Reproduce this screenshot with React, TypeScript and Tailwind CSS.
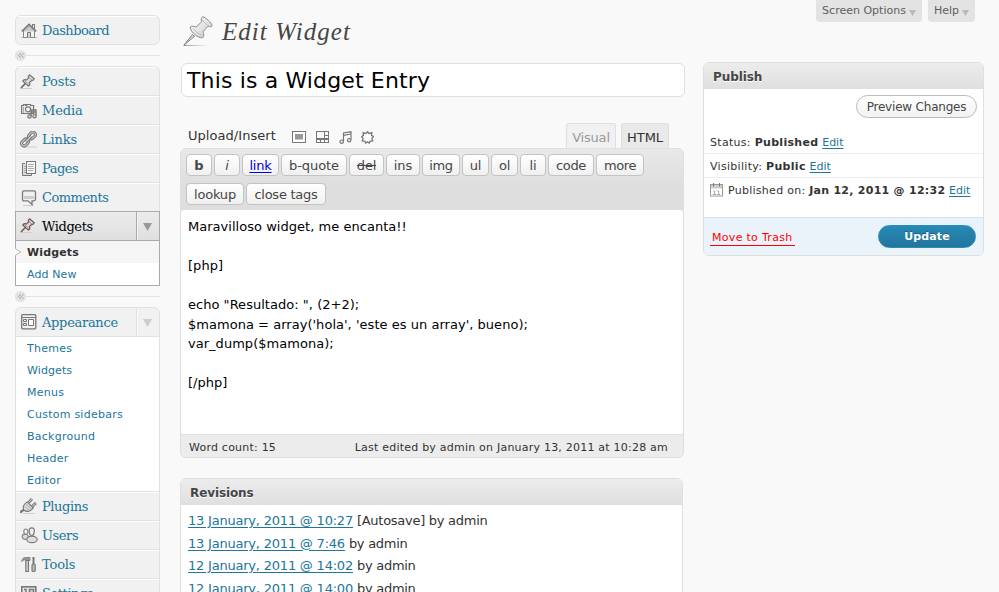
import React from "react";

type IconProps = { tint?: boolean };

const line = { fill: "none", stroke: "#7d7d7d", strokeWidth: 1.1 } as const;

function PinIcon({ tint }: IconProps) {
  return (
    <svg className="-ml-px" width="16" height="16" viewBox="0 0 16 16">
      <path d="M0 14.500H12" stroke={tint ? "#e3c9c9" : "#cfcfcf"} />
      <path d="M5.800 9L1 14" stroke="#666" strokeWidth="1.700" />
      <path
        d="M9.500.8l4.700 4-1.300 1.600-1-.1-2.400 2.200.2 2.600-1.300 1L2.800 7l1.300-1.300 2.500.2 2.200-2.400-.5-1.300z"
        fill={tint ? "#e6cfcd" : "#dedede"}
        stroke={tint ? "#6e5a5a" : "#757575"}
        strokeWidth="1.200"
        strokeLinejoin="round"
      />
      <path d="M9 3.500l3 2.700M4.800 6.800l4 3.500" stroke={tint ? "#a78f8d" : "#a5a5a5"} />
    </svg>
  );
}

function HomeIcon() {
  return (
    <svg width="16" height="16" viewBox="0 0 16 16">
      <path d="M0 14.500H16" stroke="#bbb" />
      <path d="M11.500 4V1.500h2v5" {...line} />
      <path d="M2.500 8v6.500h11V8L8 3z" fill="#f4f4f4" stroke="#858585" />
      <path d="M2.500 8.500L8 3l5.500 5.500z" fill="#c9c9c9" />
      <path d="M.8 8.400L8 1.300l7.200 7.100" fill="none" stroke="#777" strokeWidth="1.500" />
      <path d="M6.500 14.500v-5h3v5" fill="#d4d4d4" stroke="#777" />
    </svg>
  );
}

function MediaIcon() {
  return (
    <svg width="16" height="16" viewBox="0 0 16 16">
      <path d="M.6 2.500h2v-1h2v1h1v-1h4v1h3v8H.6z" fill="#e9e9e9" stroke="#777" strokeWidth="1.200" />
      <circle cx="7" cy="6.300" r="2.500" fill="#f8f8f8" stroke="#777" strokeWidth="1.200" />
      <path d="M2.500 4v6" stroke="#aaa" />
      <path d="M10 13.500V7h5v6M10 9h5" fill="none" stroke="#777" strokeWidth="1.400" />
      <circle cx="8.500" cy="13.500" r="1.700" fill="#ddd" stroke="#777" strokeWidth="1.200" />
      <circle cx="13.500" cy="13.200" r="1.700" fill="#ddd" stroke="#777" strokeWidth="1.200" />
    </svg>
  );
}

function LinkIcon() {
  return (
    <svg className="-ml-px" width="17" height="17" viewBox="0 0 17 17">
      <path d="M5 16h12" stroke="#cfcfcf" />
      <g fill="none" transform="rotate(-45 8.500 8)">
        <rect x="-.2" y="5.500" width="7.500" height="5" rx="2.500" stroke="#777" strokeWidth="3" />
        <rect x="9.700" y="5.500" width="7.500" height="5" rx="2.500" stroke="#777" strokeWidth="3" />
        <rect x="-.2" y="5.500" width="7.500" height="5" rx="2.500" stroke="#cfcfcf" strokeWidth="1" />
        <rect x="9.700" y="5.500" width="7.500" height="5" rx="2.500" stroke="#cfcfcf" strokeWidth="1" />
        <path d="M4.500 8h8" stroke="#777" strokeWidth="3" />
        <path d="M4.500 8h8" stroke="#e8e8e8" />
      </g>
    </svg>
  );
}

function PagesIcon() {
  return (
    <svg width="16" height="16" viewBox="0 0 16 16">
      <path d="M4 2.500H1.500v12h9V13" fill="#ddd" stroke="#777" />
      <rect x="5.500" y=".5" width="9" height="12" fill="#f7f7f7" stroke="#777" />
      <path d="M7 3.500h6M7 5.500h5M7 7.500h6M7 9.500h5M3 5.500h2M3 7.500h2M3 9.500h2M3 11.500h2" stroke="#aaa" />
    </svg>
  );
}

function CommentsIcon() {
  return (
    <svg width="16" height="16" viewBox="0 0 16 16">
      <path d="M2 15.500h11" stroke="#cfcfcf" />
      <path d="M3 .8h10q1.500 0 1.500 1.500v7q0 1.500-1.500 1.500h-2v3.700l-4-3.700H3q-1.500 0-1.500-1.500v-7Q1.500.8 3 .8z" fill="#f0f0f0" stroke="#7b7b7b" strokeWidth="1.300" />
      <path d="M3 6h10v3H3z" fill="#cdcdcd" />
    </svg>
  );
}

function AppearanceIcon() {
  return (
    <svg width="16" height="16" viewBox="0 0 16 16">
      <rect x=".7" y=".7" width="14.100" height="14.100" rx="1" fill="#f2f2f2" stroke="#777" strokeWidth="1.300" />
      <path d="M1 3.500h13.500" stroke="#777" strokeWidth="1.200" />
      <path d="M2.500 5.500h3v2h-3zM2.500 9.500h3v2h-3zM7.500 5.500h5v6h-5z" fill="#fff" stroke="#777" />
    </svg>
  );
}

function PlugIcon() {
  return (
    <svg className="-ml-px" width="17" height="17" viewBox="0 0 17 17">
      <path d="M3 15.500h12" stroke="#cfcfcf" />
      <path d="M1 15c-.3-2.300 1.300-1.800 2.800-3.300" fill="none" stroke="#777" strokeWidth="2.200" />
      <path d="M8.800 4.500L12 .9M12 8.500l3.900-3.600" stroke="#777" strokeWidth="2.800" />
      <path d="M8.800 4.500l3-3.300M12 8.500l3.600-3.300" stroke="#eee" strokeWidth=".9" />
      <path d="M3.900 12.200c-1.500-3.200.2-6.500 3.300-8.300l6 6c-2.200 3.300-6 4.500-9.300 2.300z" fill="#dcdcdc" stroke="#777" strokeWidth="1.200" />
      <path d="M6.200 6l5 5M5 8.500l3.700 3.700" stroke="#a5a5a5" />
    </svg>
  );
}

function UsersIcon() {
  return (
    <svg width="17" height="17" viewBox="0 0 17 17">
      <ellipse cx="4.200" cy="9.700" rx="3" ry="2.600" fill="#ddd" stroke="#888" strokeWidth="1.200" />
      <path d="M4.800 2c1.500 0 2.200 1 2.200 2.500S6.300 7.300 4.800 7.300 2.800 6 2.800 4.500 3.400 2 4.800 2z" fill="#eee" stroke="#888" strokeWidth="1.200" />
      <ellipse cx="11" cy="12.400" rx="5.200" ry="3.200" fill="#dedede" stroke="#777" strokeWidth="1.200" />
      <path d="M10.800.9c1.800 0 2.600 1.200 2.500 3-.1 2.400-.9 4.600-2.500 4.600S8.300 6.300 8.200 3.900C8.100 2.100 9 .9 10.800.9z" fill="#eee" stroke="#777" strokeWidth="1.200" />
    </svg>
  );
}

function ToolsIcon() {
  return (
    <svg width="16" height="17" viewBox="0 0 16 17">
      <path d="M.6 5.500C1 2.800 2.500 1.500 4.500 1.500H9v3H7L4.800 3.800C3 3.600 1.800 4.500.6 5.500z" fill="#999" stroke="#777" strokeWidth=".8" />
      <path d="M4.800 4.500h2.700v11H4.800z" fill="#ccc" stroke="#777" strokeWidth="1.100" />
      <path d="M12.500 1v8" stroke="#777" strokeWidth="2" />
      <rect x="11" y="8" width="3.200" height="7.500" rx="1.300" fill="#bbb" stroke="#777" strokeWidth="1.200" />
    </svg>
  );
}

function SettingsIcon() {
  return (
    <svg width="16" height="16" viewBox="0 0 16 16">
      <rect x=".8" y=".8" width="14" height="14" fill="#e8e8e8" stroke="#777" strokeWidth="1.600" />
      <path d="M3 3.500h2v9M8.500 3.500h4v3h-4zM8.500 6.500v5h4v-5" fill="none" stroke="#777" strokeWidth="1.500" />
    </svg>
  );
}

function BigPin() {
  return (
    <svg width="30" height="31" viewBox="0 0 30 31">
      <defs>
        <linearGradient id="pinFill" x1="0" y1="0" x2="1" y2="1">
          <stop offset="0" stopColor="#fff" />
          <stop offset="1" stopColor="#c9c9c9" />
        </linearGradient>
        <linearGradient id="pinGround">
          <stop offset="0" stopColor="#999" />
          <stop offset="1" stopColor="#999" stopOpacity="0" />
        </linearGradient>
      </defs>
      <rect x="1" y="29" width="24" height="1" fill="url(#pinGround)" />
      <path d="M9.500 18.500L.8 29.300l10.600-8.900z" fill="#d8d8d8" stroke="#777" strokeWidth=".9" />
      <path
        d="M19.800.7c2.800.6 8.800 6 9.400 9.300-.9 1-2.500 1-4.100.1l-5.200 5.800c1.200 2.100 1.300 4.600-.3 5.900C14.700 22 8.300 16.800 7 11.300c1.500-1.600 3.800-1.300 6.100-.3l5.700-5.300C17.600 3.600 18.300 1.300 19.800.7z"
        fill="url(#pinFill)"
        stroke="#8a8a8a"
      />
      <path d="M19.200 3.500c1.700 3 4.200 5.300 7.500 6.800M10.500 12.500c2 3.300 5 5.700 8.700 6.800" fill="none" stroke="#bbb" />
    </svg>
  );
}

function Caret({ color }: { color: string }) {
  return (
    <svg width="9" height="8" viewBox="0 0 9 8">
      <path d="M0 0h9L4.500 8z" fill={color} />
    </svg>
  );
}

function SmallCaret() {
  return (
    <svg className="mt-[2px]" width="7" height="6" viewBox="0 0 7 6">
      <path d="M0 0h7L3.500 6z" fill="#b9b9b9" />
    </svg>
  );
}

function Separator() {
  return (
    <div className="flex h-[11px] w-[145px] items-center">
      <div className="flex h-[11px] w-[11px] items-center justify-center rounded-full bg-[#e3e3e3]">
        <svg width="6" height="5" viewBox="0 0 6 5">
          <path d="M2.700.2L.6 2.500l2.100 2.300M5.500.2L3.400 2.500l2.100 2.300" fill="none" stroke="#999" strokeWidth=".9" />
        </svg>
      </div>
      <div className="h-px grow bg-[#e3e3e3]" />
    </div>
  );
}

const serif = "font-['DejaVu_Serif',serif] text-[13px] leading-none whitespace-nowrap";

function MenuItem({
  icon,
  label,
  spacing = "tracking-[-0.15px]",
  last,
}: {
  icon: React.ReactNode;
  label: string;
  spacing?: string;
  last?: boolean;
}) {
  return (
    <div className={`flex h-[29px] items-center border-t border-b border-t-white pl-[5px] ${last ? "border-b-transparent" : "border-b-[#e1e1e1]"}`}>
      <span className="flex w-[21px] shrink-0 justify-start">{icon}</span>
      <span className={`${serif} ${spacing} text-[#21759b]`}>{label}</span>
    </div>
  );
}

function SubItem({ label, spacing = "tracking-[0.25px]" }: { label: string; spacing?: string }) {
  return (
    <div className={`flex h-[22px] items-center pt-[2px] pl-[11px] text-[11px] whitespace-nowrap text-[#21759b] ${spacing}`}>{label}</div>
  );
}

function Sidebar() {
  return (
    <div className="w-[145px] shrink-0">
      <div className="mt-[15px] h-[30px] overflow-hidden rounded-[6px] border border-[#e1e1e1] bg-[#f1f1f1]">
        <MenuItem icon={<HomeIcon />} label="Dashboard" spacing="tracking-[-0.5px]" last />
      </div>
      <div className="mt-[5px]">
        <Separator />
      </div>
      <div className="mt-[5px] h-[145px] overflow-hidden rounded-t-[6px] border border-b-0 border-[#e1e1e1] bg-[#f1f1f1]">
        <MenuItem icon={<PinIcon />} label="Posts" />
        <MenuItem icon={<MediaIcon />} label="Media" />
        <MenuItem icon={<LinkIcon />} label="Links" />
        <MenuItem icon={<PagesIcon />} label="Pages" spacing="tracking-[-0.5px]" />
        <MenuItem icon={<CommentsIcon />} label="Comments" spacing="tracking-[-0.5px]" last />
      </div>
      <div className="h-[75px] border border-[#aaa] bg-white">
        <div className="flex h-[29px] border-b border-[#aaa] bg-linear-to-b from-[#ececec] to-[#dfdfdf]">
          <div className="flex w-[121px] items-center border-r border-[#aaa] pl-[5px]">
            <span className="w-[21px] shrink-0"><PinIcon tint /></span>
            <span className={`${serif} tracking-[-0.4px] text-black`}>Widgets</span>
          </div>
          <div className="flex grow items-center justify-center border-l border-[#f4f4f4] pt-[2px] pr-[2px]"><Caret color="#999" /></div>
        </div>
        <div className="relative flex h-[22px] items-center bg-[#f5f5f5] pt-[2px] pl-[11px] text-[11px] font-bold tracking-[0.15px] text-[#333]">
          <svg className="absolute top-[7px] -left-px" width="7" height="8" viewBox="0 0 7 8">
            <path d="M0 .5L6 4 0 7.500" fill="#f9f9f9" stroke="#bbb" />
          </svg>
          Widgets
        </div>
        <SubItem label="Add New" spacing="tracking-[0.1px]" />
      </div>
      <div className="mt-[5px]">
        <Separator />
      </div>
      <div className="mt-[5px] h-[320px] overflow-hidden rounded-t-[6px] border border-[#e1e1e1] bg-[#f1f1f1]">
        <div className="flex h-[29px] border-b border-[#e1e1e1]">
          <div className="flex w-[121px] items-center border-r border-[#e1e1e1] pl-[5px]">
            <span className="w-[21px] shrink-0"><AppearanceIcon /></span>
            <span className={`${serif} tracking-[-0.3px] text-[#21759b]`}>Appearance</span>
          </div>
          <div className="flex grow items-center justify-center border-l border-[#f9f9f9] pt-[2px] pr-[2px]"><Caret color="#ccc" /></div>
        </div>
        <div className="h-[155px] border-b border-[#e1e1e1] bg-white">
          <SubItem label="Themes" />
          <SubItem label="Widgets" spacing="tracking-[0.1px]" />
          <SubItem label="Menus" />
          <SubItem label="Custom sidebars" />
          <SubItem label="Background" />
          <SubItem label="Header" />
          <SubItem label="Editor" />
        </div>
        <MenuItem icon={<PlugIcon />} label="Plugins" spacing="tracking-[-0.4px]" />
        <MenuItem icon={<UsersIcon />} label="Users" spacing="tracking-[-0.4px]" />
        <MenuItem icon={<ToolsIcon />} label="Tools" />
        <MenuItem icon={<SettingsIcon />} label="Settings" spacing="tracking-[-0.4px]" />
      </div>
    </div>
  );
}

function QuickTag({ children, width, extra = "" }: { children: React.ReactNode; width: string; extra?: string }) {
  return (
    <button
      type="button"
      className={`flex h-[22px] shrink-0 items-center justify-center rounded-[4px] border border-[#c3c3c3] bg-linear-to-b from-white to-[#f0f0f0] pt-px text-[13px] whitespace-nowrap text-[#464646] ${width} ${extra}`}
    >
      {children}
    </button>
  );
}

function MediaButtons() {
  return (
    <div className="flex h-[14px] items-center">
      <svg width="14" height="12" viewBox="0 0 14 12">
        <rect x=".5" y=".5" width="13" height="11" fill="#fff" stroke="#777" />
        <path d="M3 3h8v5H3z" fill="#999" />
        <path d="M3 8h8v1H3z" fill="#ccc" />
      </svg>
      <svg className="ml-[10px]" width="13" height="12" viewBox="0 0 13 12">
        <rect x=".5" y=".5" width="12" height="11" fill="#f9f9f9" stroke="#777" />
        <path d="M1 8h11.500" stroke="#777" strokeWidth="2" />
        <path d="M8.500 1v6.500M8.500 4.500H12M4.500 8v3M8.500 8v3" stroke="#777" fill="none" />
      </svg>
      <svg className="ml-[10px]" width="13" height="13" viewBox="0 0 13 13">
        <path d="M4.500 10.500V2L12 .8v8M4.500 4.300L12 3" fill="none" stroke="#777" strokeWidth="1.200" />
        <circle cx="2.700" cy="10.700" r="1.700" fill="#eee" stroke="#777" strokeWidth="1.200" />
        <circle cx="10.200" cy="9.200" r="1.700" fill="#eee" stroke="#777" strokeWidth="1.200" />
      </svg>
      <svg className="ml-[9px]" width="13" height="13" viewBox="0 0 13 13">
        <path
          d="M6.500.6l1.400 2 2.900-.9-.2 2.700 1.900 1.300-1.600 1.700.8 2.500-2.500.2-1 2-1.700-1.300-1.700 1.300-1-2-2.500-.2.800-2.500L.5 5.700l1.900-1.300-.2-2.700 2.900.9z"
          fill="#fdfdfd"
          stroke="#777"
          strokeWidth="1.300"
        />
      </svg>
    </div>
  );
}

function Editor() {
  return (
    <div className="w-[504px]">
      <div className="flex h-[25px] pl-[8px]">
        <span className="w-[104px] pt-[3px] text-[13px] leading-[19px] tracking-[0.05px] text-[#333]">Upload/Insert</span>
        <div className="pt-[7px]"><MediaButtons /></div>
        <div className="mr-[15px] ml-auto flex gap-[5px] text-[13px]">
          <div className="flex w-[50px] items-center justify-center rounded-t-[3px] border border-b-0 border-[#dfdfdf] bg-[#f1f1f1] pt-[3px] tracking-[-0.2px] text-[#999]">Visual</div>
          <div className="flex w-[48px] items-center justify-center rounded-t-[3px] border border-b-0 border-[#dfdfdf] bg-[#e9e9e9] pt-[3px] tracking-[-0.1px] text-[#333]">HTML</div>
        </div>
      </div>
      <div className="h-[310px] overflow-hidden rounded-[6px] border border-[#dfdfdf] bg-[#dfdfdf]">
        <div className="h-[61px] bg-linear-to-b from-[#e9e9e9] to-[#dedede] to-60% pt-[5px] pl-[5px]">
          <div className="flex gap-[2px]">
            <QuickTag width="w-[26px]" extra="font-bold">b</QuickTag>
            <QuickTag width="w-[26px]" extra="italic">i</QuickTag>
            <QuickTag width="w-[37px]" extra="!text-[#0000ee] underline underline-offset-2 tracking-[-0.2px]">link</QuickTag>
            <QuickTag width="w-[66px]" extra="tracking-[-0.1px]">b-quote</QuickTag>
            <QuickTag width="w-[35px]" extra="line-through tracking-[-0.2px]">del</QuickTag>
            <QuickTag width="w-[34px]" extra="tracking-[-0.1px]">ins</QuickTag>
            <QuickTag width="w-[38px]" extra="tracking-[-0.3px]">img</QuickTag>
            <QuickTag width="w-[27px]" extra="tracking-[-0.2px]">ul</QuickTag>
            <QuickTag width="w-[27px]" extra="tracking-[-0.2px]">ol</QuickTag>
            <QuickTag width="w-[26px]" extra="tracking-[-0.2px]">li</QuickTag>
            <QuickTag width="w-[46px]" extra="tracking-[-0.3px]">code</QuickTag>
            <QuickTag width="w-[48px]" extra="tracking-[-0.4px]">more</QuickTag>
          </div>
          <div className="mt-[7px] flex gap-[2px]">
            <QuickTag width="w-[58px]" extra="tracking-[-0.2px]">lookup</QuickTag>
            <QuickTag width="w-[80px]" extra="tracking-[-0.25px]">close tags</QuickTag>
          </div>
        </div>
        <div className="h-[224px] rounded-t-[3px] bg-white pt-[7px] pl-[7px] text-[13px] leading-[19.500px] tracking-[0.03px] whitespace-pre text-black">
          {`Maravilloso widget, me encanta!!

[php]

echo "Resultado: ", (2+2);
$mamona = array('hola', 'este es un array', bueno);
var_dump($mamona);

[/php]`}
        </div>
        <div className="flex h-[23px] items-center justify-between border-t border-[#dfdfdf] bg-[#ececec] pt-[4px] pr-[15px] pl-[8px] text-[11px] whitespace-nowrap text-[#333]">
          <span className="tracking-[0.22px]">Word count: 15</span>
          <span className="tracking-[0.22px]">Last edited by admin on January 13, 2011 at 10:28 am</span>
        </div>
      </div>
    </div>
  );
}

function Revision({ date, rest }: { date: string; rest: string }) {
  return (
    <div className="h-[22.500px] leading-[22px] tracking-[-0.21px] whitespace-nowrap">
      <a className="text-[#21759b] underline underline-offset-[2px]">{date}</a> <span className="tracking-[-0.27px]">{rest}</span>
    </div>
  );
}

const boxHead =
  "flex h-[26px] items-center bg-linear-to-b from-[#ececec] to-[#dfdfdf] pl-[9px] pt-px text-[12px] tracking-[-0.1px] font-bold text-[#464646] [text-shadow:0_1px_0_#fff]";

const editLink = "tracking-normal text-[#21759b] underline underline-offset-[2px]";

function PublishBox() {
  return (
    <div className="h-[194px] w-[281px] overflow-hidden rounded-[6px] border border-[#dfdfdf] bg-white text-[11px] whitespace-nowrap text-[#333]">
      <div className={boxHead}>Publish</div>
      <div className="flex h-[41px] justify-end pt-[6px] pr-[6px]">
        <button
          type="button"
          className="flex h-[23px] w-[121px] items-center justify-center rounded-full border border-[#bbb] bg-linear-to-b from-white to-[#f2f2f2] pt-px text-[12px] tracking-[-0.2px] text-[#464646]"
        >
          Preview Changes
        </button>
      </div>
      <div className="flex h-[24px] items-center border-b border-[#eee] pt-[3px] pl-[6px]">
        <span className="tracking-[0.3px]">Status:&nbsp;<b>Published</b>&nbsp;<a className={editLink}>Edit</a></span>
      </div>
      <div className="flex h-[24px] items-center border-b border-[#eee] pt-[3px] pl-[6px]">
        <span className="tracking-[0.3px]">Visibility:&nbsp;<b>Public</b>&nbsp;<a className={editLink}>Edit</a></span>
      </div>
      <div className="flex h-[39px] items-start pt-[5px] pl-[6px]">
        <svg className="mr-[5px]" width="13" height="14" viewBox="0 0 13 14">
          <rect x=".5" y="1.500" width="12" height="11.500" fill="#fff" stroke="#999" />
          <path d="M1 2h11v3.500H1z" fill="#ccc" />
          <path d="M3.500 0v3.500M9.500 0v3.500" stroke="#777" />
          <path d="M3.200 8h1.500v3.500M3 11.500h3.200M7.200 8h1.500v3.500M7 11.500h3.200" fill="none" stroke="#aaa" />
        </svg>
        <span className="pt-px leading-[14px] tracking-[0.27px]">Published on:&nbsp;<b>Jan 12, 2011 @ 12:32</b>&nbsp;<a className={editLink}>Edit</a></span>
      </div>
      <div className="flex h-[38px] items-center justify-between border-t border-[#dfdfdf] bg-[#eaf2fa] pr-[7px] pl-[6px]">
        <a className="mt-[2px] border-b border-[#f00] px-[2px] pt-px leading-[14px] tracking-[0.3px] text-[#f00]">Move to Trash</a>
        <button
          type="button"
          className="flex h-[23px] w-[98px] items-center justify-center rounded-full border border-[#298cba] bg-linear-to-b from-[#278ab7] to-[#21759b] pt-px text-[11px] font-bold tracking-[0.1px] text-white [text-shadow:0_-1px_0_rgba(0,0,0,0.3)]"
        >
          Update
        </button>
      </div>
    </div>
  );
}

export default function App() {
  return (
    <div className="flex h-[592px] w-[999px] overflow-hidden bg-[#f9f9f9] pl-[15px] font-['DejaVu_Sans',Verdana,sans-serif]">
      <Sidebar />
      <div className="ml-[20px] w-[505px] shrink-0">
        <div className="flex h-[63px] pt-[16px] pl-[3px]">
          <BigPin />
          <h1 className="ml-[9px] font-['Liberation_Serif',serif] text-[25px] leading-[31px] tracking-[1.050px] whitespace-nowrap text-[#464646] italic">Edit Widget</h1>
        </div>
        <div className="ml-px flex h-[34px] items-center rounded-[6px] border border-[#dfdfdf] bg-white pt-px pl-[5px] text-[22px] tracking-[0.140px] whitespace-nowrap text-black">
          This is a Widget Entry
        </div>
        <div className="mt-[26px]">
          <Editor />
        </div>
        <div className="mt-[20px] h-[140px] w-[503px] overflow-hidden rounded-t-[6px] border border-[#dfdfdf] bg-white">
          <div className={boxHead}>Revisions</div>
          <div className="pt-[5px] pl-[7px] text-[13px] text-[#333]">
            <Revision date="13 January, 2011 @ 10:27" rest="[Autosave] by admin" />
            <Revision date="13 January, 2011 @ 7:46" rest="by admin" />
            <Revision date="12 January, 2011 @ 14:02" rest="by admin" />
            <Revision date="12 January, 2011 @ 14:00" rest="by admin" />
          </div>
        </div>
      </div>
      <div className="ml-[18px] w-[281px] shrink-0">
        <div className="flex h-[62px] items-start justify-end gap-[6px] pr-[9px] text-[11px] whitespace-nowrap text-[#606060]">
          <div className="flex h-[22px] w-[106px] items-center justify-center gap-[3px] rounded-b-[4px] bg-[#e3e3e3] pt-px">
            <span>Screen Options</span><SmallCaret />
          </div>
          <div className="flex h-[22px] w-[47px] items-center justify-center gap-[3px] rounded-b-[4px] bg-[#e3e3e3] pt-px">
            <span>Help</span><SmallCaret />
          </div>
        </div>
        <PublishBox />
      </div>
    </div>
  );
}
